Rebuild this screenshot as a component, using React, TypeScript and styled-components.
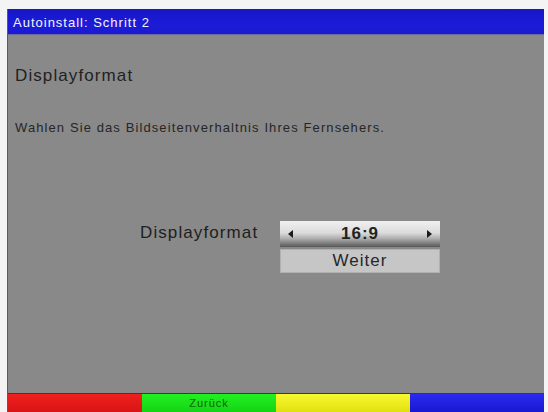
import React from "react";
import styled, { createGlobalStyle } from "styled-components";

const Global = createGlobalStyle`
  html, body { margin: 0; padding: 0; background: #f4f4f4; }
  body { font-family: "Liberation Sans", Arial, sans-serif; }
`;

const Page = styled.div`
  width: 548px;
  height: 412px;
  padding: 9px 4px 0 7px;
  box-sizing: border-box;
  overflow: hidden;
`;

const Screen = styled.div`
  height: 403px;
  display: flex;
  flex-direction: column;
  background: #898989;
  border-left: 1px solid #5a5a66;
  box-sizing: border-box;
`;

const Header = styled.div`
  height: 26px;
  background: linear-gradient(#1616c8, #1c1cd8 60%, #1a1ad0);
  border-top: 1px solid #2a2a3a;
  box-sizing: border-box;
  display: flex;
  align-items: center;
  padding-left: 5px;
  color: #f4f4ff;
  font-size: 13px;
  letter-spacing: 1px;
  border-bottom: 1px solid #6a6a9a;
`;

const Content = styled.div`
  flex: 1;
  display: flex;
  flex-direction: column;
  padding: 31px 0 0 7px;
`;

const Title = styled.div`
  font-size: 17px;
  letter-spacing: 1.1px;
  color: #222;
  line-height: 20px;
`;

const Desc = styled.div`
  margin-top: 35px;
  font-size: 13px;
  letter-spacing: 1.1px;
  color: #262626;
  line-height: 14px;
`;

const Form = styled.div`
  margin-top: 86px;
  margin-left: 125px;
  display: grid;
  grid-template-columns: 140px 160px;
  grid-template-rows: 26px 24px;
  row-gap: 2px;
  align-items: center;
`;

const Label = styled.div`
  font-size: 17px;
  letter-spacing: 1.1px;
  color: #1e1e1e;
  margin-top: -2px;
`;

const Selector = styled.div`
  height: 26px;
  box-sizing: border-box;
  display: flex;
  align-items: center;
  justify-content: space-between;
  padding: 0 8px;
  background: linear-gradient(#f0f0f0 0%, #dcdcdc 45%, #b4b4b4 65%, #808080 85%, #585858 100%);
  color: #222;
  font-size: 17px;
  font-weight: bold;
  letter-spacing: 1px;
`;

const Arrow = styled.span<{ $dir: "l" | "r" }>`
  width: 0;
  height: 0;
  border-top: 4px solid transparent;
  border-bottom: 4px solid transparent;
  ${(p) => (p.$dir === "l" ? "border-right: 5px solid #1a1a1a;" : "border-left: 5px solid #1a1a1a;")}
`;

const Button = styled.div`
  grid-column: 2;
  height: 24px;
  box-sizing: border-box;
  display: flex;
  align-items: center;
  justify-content: center;
  background: #c6c6c6;
  border: 1px solid #b0b0b0;
  color: #262626;
  font-size: 17px;
  letter-spacing: 1px;
`;

const Footer = styled.div`
  height: 19px;
  display: grid;
  grid-template-columns: repeat(4, 1fr);
  border-top: 1px solid #3a3a3a;
  box-sizing: border-box;
`;

const Key = styled.div<{ $c: string }>`
  background: ${(p) => p.$c};
  display: flex;
  align-items: center;
  justify-content: center;
  color: #126012;
  font-size: 11px;
  letter-spacing: 1px;
`;

export default function App() {
  return (
    <Page>
      <Global />
      <Screen>
        <Header>Autoinstall: Schritt 2</Header>
        <Content>
          <Title>Displayformat</Title>
          <Desc>Wahlen Sie das Bildseitenverhaltnis Ihres Fernsehers.</Desc>
          <Form>
            <Label>Displayformat</Label>
            <Selector>
              <Arrow $dir="l" />
              <span>16:9</span>
              <Arrow $dir="r" />
            </Selector>
            <Button>Weiter</Button>
          </Form>
        </Content>
        <Footer>
          <Key $c="linear-gradient(#f02020, #d81414)" />
          <Key $c="linear-gradient(#22f022, #14d414)">Zurück</Key>
          <Key $c="linear-gradient(#f8f830, #e0e010)" />
          <Key $c="linear-gradient(#2a2af0, #1818d0)" />
        </Footer>
      </Screen>
    </Page>
  );
}
